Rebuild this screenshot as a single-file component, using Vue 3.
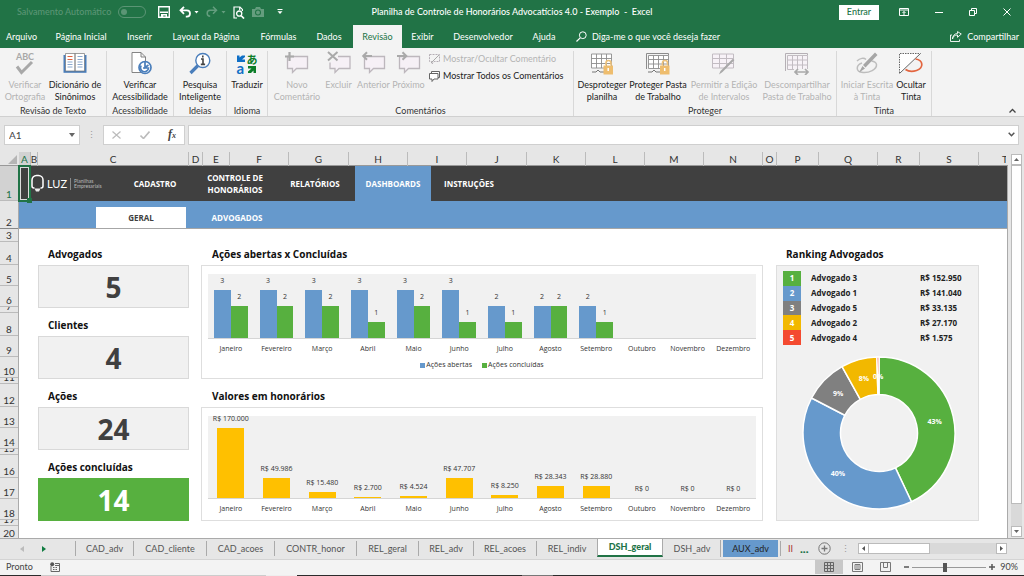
<script setup>
import { ref } from 'vue'

const ribbonTabs = ['Arquivo', 'Página Inicial', 'Inserir', 'Layout da Página', 'Fórmulas', 'Dados', 'Revisão', 'Exibir', 'Desenvolvedor', 'Ajuda']
const columns = ['A', 'B', 'C', 'D', 'E', 'F', 'G', 'H', 'I', 'J', 'K', 'L', 'M', 'N', 'O', 'P', 'Q', 'R', 'S', 'T']
const nav = [
  { name: 'CADASTRO' }, { name: 'CONTROLE DE HONORÁRIOS' }, { name: 'RELATÓRIOS' },
  { name: 'DASHBOARDS', active: true }, { name: 'INSTRUÇÕES' }
]
const cards = [
  { name: 'Advogados', value: 5 }, { name: 'Clientes', value: 4 },
  { name: 'Ações', value: 24 }, { name: 'Ações concluídas', value: 14, green: true }
]
const months = ['Janeiro', 'Fevereiro', 'Março', 'Abril', 'Maio', 'Junho', 'Julho', 'Agosto', 'Setembro', 'Outubro', 'Novembro', 'Dezembro']
const opened = [3, 3, 3, 3, 3, 3, 2, 2, 2, 0, 0, 0]
const closed = [2, 2, 2, 1, 2, 1, 1, 2, 1, 0, 0, 0]
const fees = [170000, 49986, 15480, 2700, 4524, 47707, 8250, 28343, 28880, 0, 0, 0]
const money = n => 'R$ ' + String(n).replace(/\B(?=(\d{3})+$)/g, '.')

const ranking = [
  { name: 'Advogado 3', total: 152950, color: '#57b03f' },
  { name: 'Advogado 1', total: 141040, color: '#6699cc' },
  { name: 'Advogado 5', total: 33135, color: '#808080' },
  { name: 'Advogado 2', total: 27170, color: '#f2b800' },
  { name: 'Advogado 4', total: 1575, color: '#f44a30' }
]
const sum = ranking.reduce((a, r) => a + r.total, 0)
const point = (turn, radius) => {
  const a = turn * Math.PI * 2
  return [Math.sin(a) * radius, -Math.cos(a) * radius]
}
let turn = 0
const slices = ranking.map(r => {
  const from = turn
  const to = (turn += r.total / sum)
  const big = to - from > 0.5 ? 1 : 0
  const label = point((from + to) / 2, 57)
  return {
    color: r.color,
    d: `M${point(from, 76)} A76 76 0 ${big} 1 ${point(to, 76)} L${point(to, 38.5)} A38.5 38.5 0 ${big} 0 ${point(from, 38.5)}Z`,
    x: label[0],
    y: label[1],
    text: Math.round((r.total / sum) * 100) + '%'
  }
})

const sheets = ['CAD_adv', 'CAD_cliente', 'CAD_acoes', 'CONTR_honor', 'REL_geral', 'REL_adv', 'REL_acoes', 'REL_indiv', 'DSH_geral', 'DSH_adv', 'AUX_adv', 'II']
const cell = ref('A1')
const formula = ref('')
const zoom = ref(90)
</script>

<template>
  <div class="app">
    <header class="titlebar">
      <div class="quick">
        <label class="autosave">Salvamento Automático
          <input type="checkbox" role="switch" disabled>
        </label>
        <button class="ico" aria-label="Salvar"><svg width="12" height="12" viewBox="0 0 12 12"><path d="M.7.7h10.6v10.6H.7z" fill="none" stroke="#fff" stroke-width="1.4" /><path d="M2 5.6h8V7H2zM3 8h6v4H7.6V9.6H5.2V12H3z" fill="#fff" /></svg></button>
        <button class="ico undo" aria-label="Desfazer"><svg width="20" height="12" viewBox="0 0 20 12"><path d="M1.5 4.3h6.3a3.2 3.2 0 0 1 0 6.4H6.8M5 .8 1.5 4.3 5 7.8" fill="none" stroke="#fff" stroke-width="1.8" /><path d="M15.5 5h4l-2 2.5z" fill="#fff" /></svg></button>
        <button class="ico faded" aria-label="Refazer"><svg width="20" height="12" viewBox="0 0 20 12"><path d="M10.5 4.3H4.2a3 3 0 0 0 0 6M7 .8l3.5 3.5L7 7.8" fill="none" stroke="#fff" stroke-width="1.5" /><path d="M15.500 5h4l-2 2.500z" fill="#fff" /></svg></button>
        <button class="ico preview" aria-label="Visualizar"><svg width="12" height="13" viewBox="0 0 12 13"><path d="M4 12H1V1h6l2.4 2.4V5M6.700 1v3" fill="none" stroke="#fff" stroke-width="1.2" /><circle cx="6.2" cy="7.6" r="2.6" fill="none" stroke="#fff" stroke-width="1.3" /><path d="m8 9.500 3 3" stroke="#fff" stroke-width="1.700" /></svg></button>
        <button class="ico faded" aria-label="Câmera"><svg width="12" height="10" viewBox="0 0 12 10"><path d="M0 2h3l1-2h4l1 2h3v8H0z" fill="#fff" /><circle cx="6" cy="5.5" r="2.5" fill="none" stroke="#217346" stroke-width="1.1" /></svg></button>
        <button class="ico more" aria-label="Personalizar"><svg width="6" height="6" viewBox="0 0 6 6"><path d="M.5 0h5v1h-5zM.5 2.2h5L3 5z" fill="#fff" /></svg></button>
      </div>
      <h1>Planilha de Controle de Honorários Advocatícios 4.0 - Exemplo&nbsp; -&nbsp; Excel</h1>
      <div class="window">
        <button class="login">Entrar</button>
        <button class="ico" aria-label="Opções da faixa"><svg width="10" height="8" viewBox="0 0 10 8"><path d="M.5.5h9v7h-9zM.5 2h9M5 7V3.5M3.5 5 5 3.5 6.5 5" fill="none" stroke="#fff" /></svg></button>
        <button class="ico" aria-label="Minimizar"><svg width="8" height="8" viewBox="0 0 8 8"><path d="M0 4.5h8" stroke="#fff" /></svg></button>
        <button class="ico" aria-label="Restaurar"><svg width="8" height="8" viewBox="0 0 8 8"><path d="M.5 2.5h5v5h-5zM2.5 2V.5h5v5H6" fill="none" stroke="#fff" /></svg></button>
        <button class="ico" aria-label="Fechar"><svg width="8" height="8" viewBox="0 0 8 8"><path d="m.5.5 7 7m0-7-7 7" stroke="#fff" /></svg></button>
      </div>
    </header>

    <nav class="menubar">
      <div class="menus">
        <button v-for="t in ribbonTabs" :key="t" :class="{ active: t === 'Revisão' }">{{ t }}</button>
      </div>
      <button class="tell"><svg width="11" height="11" viewBox="0 0 11 11"><circle cx="6.8" cy="4.2" r="3.4" fill="none" stroke="#fff" /><path d="M4.2 6.8.5 10.5" stroke="#fff" stroke-width="1.2" /></svg>Diga-me o que você deseja fazer</button>
      <button class="share"><svg width="12" height="11" viewBox="0 0 12 11"><path d="M2 4H.5v6.5h9V8.5M2.5 8C3 5 5 4 7.5 4V6.3L11.3 3 7.5.6V2.5C4.5 2.5 2.5 5 2.5 8z" fill="none" stroke="#fff" stroke-width=".9" /></svg>Compartilhar</button>
    </nav>

    <section class="ribbon" aria-label="Revisão">
      <div class="group g1">
        <div class="tools">
          <button class="tool" disabled>
            <svg viewBox="0 0 26 24"><text x="13" y="9" text-anchor="middle" font-size="9" font-weight="700">ABC</text><path d="m5 15.500 4.500 6L20 11" fill="none" stroke="#a8a8a8" stroke-width="3" /></svg>
            <span>Verificar<br>Ortografia</span>
          </button>
          <button class="tool">
            <svg viewBox="0 0 26 24"><path d="M1.500 4h23v17.800h-23z" fill="#4a7ebb" /><path d="M3.500 2.500h9.500V20H3.500zM13 2.500h9.500V20H13z" fill="#fff" stroke="#777" stroke-width=".7" /><path d="M5.500 5.500h5M5.500 8.500h5" stroke="#e0623e" /><path d="M5.500 11h5M5.500 13.500h5M5.500 16h5M15.500 5.500h5M15.500 8.500h5M15.500 11h5M15.500 13.500h5M15.500 16h5" stroke="#8aa9cf" /></svg>
            <span>Dicionário de<br>Sinônimos</span>
          </button>
        </div>
        <h2>Revisão de Texto</h2>
      </div>
      <div class="group g2">
        <div class="tools">
          <button class="tool">
            <svg viewBox="0 0 26 24"><path d="M5 1.500h9l4.500 4.500v15.500H5zM14 1.500V6h4.500" fill="#fff" stroke="#777" stroke-width=".9" /><circle cx="18" cy="16.500" r="6" fill="#fff" stroke="#4a7ebb" stroke-width="1.700" /><path d="M18 11v5.500l3.500-2.500M14.200 14.500a4 4 0 1 0 7.300 2.500H16" fill="none" stroke="#4a7ebb" stroke-width="1.700" /></svg>
            <span>Verificar<br>Acessibilidade</span>
          </button>
        </div>
        <h2>Acessibilidade</h2>
      </div>
      <div class="group g3">
        <div class="tools">
          <button class="tool">
            <svg viewBox="0 0 26 24"><path d="M11 14.500 3.500 22" stroke="#4a7ebb" stroke-width="3.200" /><circle cx="15.800" cy="9.500" r="7" fill="#fff" stroke="#4a7ebb" stroke-width="1.400" /><path d="M15.800 4.500v2M14 8h2v5M13.800 13.400h4.300" fill="none" stroke="#444" stroke-width="1.600" /></svg>
            <span>Pesquisa<br>Inteligente</span>
          </button>
        </div>
        <h2>Ideias</h2>
      </div>
      <div class="group g4">
        <div class="tools">
          <button class="tool">
            <svg viewBox="0 0 26 24"><path d="M3 4.500h2.500v2L8 4.500h3V6L8 8.500h3V11H3z" fill="#0f6fc6" /><text x="2.500" y="22.500" font-size="15" font-weight="700" class="la">a</text><text x="12.500" y="12.500" font-size="11" font-weight="700" class="ja">あ</text><path d="M22 15h-8v2.500h3.500L14 20.500V22h3l2.500-2.500V22H22z" fill="#0b7d28" /></svg>
            <span>Traduzir</span>
          </button>
        </div>
        <h2>Idioma</h2>
      </div>
      <div class="group g5">
        <div class="tools">
          <button class="tool" disabled>
            <svg viewBox="0 0 26 24"><path d="M3.500 5.500h20v12h-11l-4 4v-4h-5z" fill="#f6f0f6" stroke="#bdb7bd" stroke-width="1.300" /><path d="M5.500 1v9M1 5.500h9" stroke="#a9a9a9" stroke-width="2.200" /></svg>
            <span>Novo<br>Comentário</span>
          </button>
          <button class="tool" disabled>
            <svg viewBox="0 0 26 24"><path d="M12 5.500h12v12H13l-4 4v-4H4v-6" fill="#f6f0f6" stroke="#bdb7bd" stroke-width="1.300" /><path d="m2 1 9.500 8.500M11.500 1 2 9.500" stroke="#a9a9a9" stroke-width="2" /></svg>
            <span>Excluir</span>
          </button>
          <button class="tool" disabled>
            <svg viewBox="0 0 26 24"><path d="M3.500 5.500h20v12h-11l-4 4v-4h-5z" fill="#f6f0f6" stroke="#bdb7bd" stroke-width="1.300" /><path d="M11 5H2.500M6 1.200 2.200 5 6 8.800" fill="none" stroke="#a9a9a9" stroke-width="2" /></svg>
            <span>Anterior</span>
          </button>
          <button class="tool" disabled>
            <svg viewBox="0 0 26 24"><path d="M3.500 5.500h20v12h-11l-4 4v-4h-5z" fill="#f6f0f6" stroke="#bdb7bd" stroke-width="1.300" /><path d="M1 5h9M6.500 1.200 10.300 5 6.500 8.800" fill="none" stroke="#a9a9a9" stroke-width="2" /></svg>
            <span>Próximo</span>
          </button>
          <div class="lines">
            <button disabled><svg width="11" height="11" viewBox="0 0 11 11"><path d="M.5.5h10v7H5l-2 2.500V7.500H.5z" fill="none" stroke="#b5aeb5" stroke-dasharray="2 1" /><path d="M2 9 10 1" stroke="#a9a9a9" /></svg>Mostrar/Ocultar Comentário</button>
            <button><svg width="11" height="11" viewBox="0 0 11 11"><path d="M2.500 2V.5h8v6H9M.5 2.500H9v5.500H5L3 10.500V8H.5z" fill="#fff" stroke="#666" /></svg>Mostrar Todos os Comentários</button>
          </div>
        </div>
        <h2>Comentários</h2>
      </div>
      <div class="group g6">
        <div class="tools">
          <button class="tool">
            <svg viewBox="0 0 26 24"><path d="M2.500 3h20v14h-20zM2.500 7.500h20M2.500 12.500h20M7.500 3v14M12.500 3v14M17.500 3v14" fill="#fff" stroke="#8c8c8c" stroke-width=".9" /><path d="M3 21h4l2-2 2 2h4" fill="none" stroke="#777" /><path d="M17 14.500V12a2.500 2.500 0 0 1 5 0v2.500" fill="none" stroke="#eec27a" stroke-width="1.600" /><path d="M14.500 14.500H24v9h-9.500z" fill="#eebd6e" /><path d="M19.200 17v3" stroke="#fff" stroke-width="1.500" /></svg>
            <span>Desproteger<br>planilha</span>
          </button>
          <button class="tool">
            <svg viewBox="0 0 26 24"><path d="M1.500 18V2.500h22v2" fill="none" stroke="#8c8c8c" /><path d="M3.500 4.500h20v13h-20zM3.500 8.500h20M3.500 13h20M8.500 4.500v13M13.500 4.500v13M18.500 4.500v13" fill="#fff" stroke="#8c8c8c" stroke-width=".9" /><path d="M3 21h4l2-2 2 2h4" fill="none" stroke="#777" /><path d="M17.500 14.500V12a2.500 2.500 0 0 1 5 0v2.500" fill="none" stroke="#eec27a" stroke-width="1.600" /><path d="M15 14.500h9.500v9H15z" fill="#eebd6e" /><path d="M19.700 17v3" stroke="#fff" stroke-width="1.500" /></svg>
            <span>Proteger Pasta<br>de Trabalho</span>
          </button>
          <button class="tool" disabled>
            <svg viewBox="0 0 26 24"><path d="M1.500 3h21v14h-21zM1.500 7.500h21M1.500 12.500h21M8.500 3v14M15.500 3v14" fill="#f7f2f7" stroke="#c2bcc2" /><path d="m23.500 9-12 12-3.500 2.500L9.500 20l12-12z" fill="#a9a9a9" /></svg>
            <span>Permitir a Edição<br>de Intervalos</span>
          </button>
          <button class="tool" disabled>
            <svg viewBox="0 0 26 24"><path d="M1.500 20V2.500h22v2" fill="none" stroke="#b5afb5" /><path d="M3.500 4.500h20v14h-20zM3.500 9h20M3.500 14h20M8.500 4.500v14M13.500 4.500v14M18.500 4.500v14" fill="#f7f2f7" stroke="#c2bcc2" /><path d="M10 18h15v5H10z" fill="#f3f3f3" /><path d="M11 21h13M14 18l-3 3 3 3M21 18l3 3-3 3" fill="none" stroke="#a9a9a9" stroke-width="1.700" /></svg>
            <span>Descompartilhar<br>Pasta de Trabalho</span>
          </button>
        </div>
        <h2>Proteger</h2>
      </div>
      <div class="group g7">
        <div class="tools">
          <button class="tool" disabled>
            <svg viewBox="0 0 26 24"><path d="M3 10c3-3 7-3.500 9-1.500M8 12c-6 2-7 9 1 9.500 6 .5 14-3 13.500-8-.3-2-2-3-5-3.500" fill="none" stroke="#bdbdbd" stroke-width="1.500" /><path d="M21 1.500 23.500 4 11.500 16.500 9 14zM8.500 15l2.500 2.500-6 4z" fill="#a6a6a6" /></svg>
            <span>Iniciar Escrita<br>à Tinta</span>
          </button>
          <button class="tool">
            <svg viewBox="0 0 26 24"><path d="M1.500 2.500h21l-21 20z" fill="#fff" /><path d="M1.500 22V2.500h21" fill="none" stroke="#666" stroke-dasharray="1.500 1" /><path d="m1.500 22.500 21-20" stroke="#666" /><path d="M17.500 8c8 1 8.500 9 1 11.500-4 1.300-8 1-11-1" fill="none" stroke="#e3653f" stroke-width="1.700" /></svg>
            <span>Ocultar<br>Tinta</span>
          </button>
        </div>
        <h2>Tinta</h2>
      </div>
      <button class="collapse" aria-label="Recolher"><svg width="7" height="5" viewBox="0 0 7 5"><path d="m.5 4.500 3-3 3 3" fill="none" stroke="#444" stroke-width="1.300" /></svg></button>
    </section>

    <section class="formulabar">
      <div class="namebox"><input v-model="cell" aria-label="Caixa de nome"><button aria-label="Nomes"><svg width="6" height="4" viewBox="0 0 6 4"><path d="M0 0h6L3 4z" fill="#666" /></svg></button></div>
      <span class="dots">⋮</span>
      <div class="fx">
        <button aria-label="Cancelar"><svg width="9" height="8" viewBox="0 0 9 8"><path d="m.5.5 8 7m0-7-8 7" stroke="#bbb" stroke-width="1.200" /></svg></button>
        <button aria-label="Inserir"><svg width="10" height="8" viewBox="0 0 10 8"><path d="m.5 4.500 3 3 6-7" fill="none" stroke="#bbb" stroke-width="1.600" /></svg></button>
        <button class="fn" aria-label="Inserir função"><i>f</i><i class="x">x</i></button>
      </div>
      <div class="formula"><input v-model="formula" aria-label="Barra de fórmulas"><button aria-label="Expandir"><svg width="7" height="5" viewBox="0 0 7 5"><path d="m.7.7 2.800 3 2.800-3" fill="none" stroke="#555" stroke-width="1.500" /></svg></button></div>
    </section>

    <section class="workspace">
      <div class="gridhead">
        <div class="corner"><svg width="9" height="9" viewBox="0 0 9 9"><path d="M9 0v9H0z" fill="#b5b5b5" /></svg></div>
        <div class="cols"><span v-for="c in columns" :key="c" :class="{ on: c === 'A' }">{{ c }}</span></div>
      </div>
      <div class="rows"><span v-for="n in 20" :key="n" :class="{ on: n === 1 }">{{ n }}</span></div>

      <div class="sheet">
        <div class="cursor"></div>
        <nav class="mainnav">
          <a class="logo" href="#" aria-label="LUZ Planilhas Empresariais">
            <svg width="13" height="19" viewBox="0 0 13 19"><path d="M3.500 14H3a2 2 0 0 1-2-2V6a4.500 4.500 0 0 1 4.500-4.500h2A4.500 4.500 0 0 1 12 6v6a2 2 0 0 1-2 2h-.5" fill="none" stroke="#fff" stroke-width="1.500" /><path d="M3.500 14.500h6L8 17.500H5z" fill="#eee" /></svg>
            <b>LUZ</b><small>Planilhas<br>Empresariais</small>
          </a>
          <a v-for="n in nav" :key="n.name" href="#" class="item" :class="{ active: n.active }">{{ n.name }}</a>
        </nav>
        <nav class="subnav"><a href="#" class="active">GERAL</a><a href="#">ADVOGADOS</a></nav>

        <div class="dash">
          <div class="stats">
            <template v-for="c in cards" :key="c.name">
              <h3>{{ c.name }}</h3>
              <div class="card" :class="{ green: c.green }">{{ c.value }}</div>
            </template>
          </div>

          <div class="charts">
            <h3>Ações abertas x Concluídas</h3>
            <div class="chart">
              <div class="plot">
                <div v-for="(m, i) in months" :key="m" class="slot">
                  <template v-if="opened[i]">
                    <div class="bar blue" :style="{ height: opened[i] * 25 + '%' }"><span>{{ opened[i] }}</span></div>
                    <div class="bar grn" :style="{ height: closed[i] * 25 + '%' }"><span>{{ closed[i] }}</span></div>
                  </template>
                </div>
              </div>
              <div class="months"><span v-for="m in months" :key="m">{{ m }}</span></div>
              <div class="legend"><span class="k1">Ações abertas</span><span class="k2">Ações concluídas</span></div>
            </div>
            <h3>Valores em honorários</h3>
            <div class="chart second">
              <div class="plot">
                <div v-for="(m, i) in months" :key="m" class="slot">
                  <div class="bar gold" :style="{ height: fees[i] / 2000 + '%' }"><span>{{ money(fees[i]) }}</span></div>
                </div>
              </div>
              <div class="months"><span v-for="m in months" :key="m">{{ m }}</span></div>
            </div>
          </div>

          <div class="rank">
            <h3>Ranking Advogados</h3>
            <div class="panel">
              <table>
                <tbody>
                  <tr v-for="(r, i) in ranking" :key="r.name">
                    <td class="pos" :class="'p' + (i + 1)">{{ i + 1 }}</td><td class="who">{{ r.name }}</td><td>{{ money(r.total) }}</td>
                  </tr>
                </tbody>
              </table>
              <svg class="donut" viewBox="-77 -77 154 154" role="img" aria-label="Participação por advogado">
                <path v-for="s in slices" :key="s.d" :d="s.d" :fill="s.color" stroke="#fff" stroke-width="1.500" stroke-linejoin="round" />
                <text v-for="s in slices" :key="s.text" :x="s.x" :y="s.y + 3" text-anchor="middle">{{ s.text }}</text>
              </svg>
            </div>
          </div>
        </div>
      </div>

      <div class="vscroll">
        <button aria-label="Subir"><svg width="5" height="3" viewBox="0 0 5 3"><path d="M0 3h5L2.500 0z" fill="#666" /></svg></button>
        <div class="track"><div class="thumb"></div></div>
        <button aria-label="Descer"><svg width="5" height="3" viewBox="0 0 5 3"><path d="M0 0h5L2.500 3z" fill="#666" /></svg></button>
      </div>
    </section>

    <nav class="sheetbar">
      <div class="tabs">
        <span class="arrows"><button class="dim" aria-label="Anterior"><svg width="4" height="6" viewBox="0 0 4 6"><path d="M4 0v6L0 3z" fill="#bbb" /></svg></button><button aria-label="Próxima"><svg width="4" height="6" viewBox="0 0 4 6"><path d="M0 0v6l4-3z" fill="#107c41" /></svg></button></span>
        <button v-for="s in sheets" :key="s" class="tab" :class="{ active: s === 'DSH_geral', aux: s === 'AUX_adv', last: s === 'II' }">{{ s }}</button>
        <button class="dotsmore" aria-label="Mais planilhas">...</button>
        <button class="add" aria-label="Nova planilha"><svg width="13" height="13" viewBox="0 0 13 13"><circle cx="6.500" cy="6.500" r="5.700" fill="none" stroke="#777" /><path d="M3.500 6.500h6M6.500 3.500v6" stroke="#777" stroke-width="1.300" /></svg></button>
        <span class="dots">⋮</span>
      </div>
      <div class="hscroll">
        <button aria-label="Esquerda"><svg width="3" height="5" viewBox="0 0 3 5"><path d="M3 0v5L0 2.500z" fill="#555" /></svg></button>
        <div class="track"><div class="thumb"></div></div>
        <button aria-label="Direita"><svg width="3" height="5" viewBox="0 0 3 5"><path d="M0 0v5l3-2.500z" fill="#555" /></svg></button>
      </div>
    </nav>

    <footer class="status">
      <span>Pronto</span>
      <button class="macro" aria-label="Gravar macro"><svg width="10" height="10" viewBox="0 0 10 10"><path d="M1 4v5.500h8.500v-8H5" fill="none" stroke="#666" /><circle cx="2.200" cy="2.200" r="2" fill="#555" /><path d="M5 3.500h4M3 5.500h1.500M5.500 5.500h1.500M3 7.500h1.500M5.500 7.500h1.500" stroke="#666" /></svg></button>
      <div class="right">
        <button class="view on" aria-label="Normal"><svg width="10" height="10" viewBox="0 0 10 10"><path d="M.5.5h9v9h-9zM.5 3.500h9M.5 6.500h9M3.500.5v9M6.500.5v9" fill="none" stroke="#666" /></svg></button>
        <button class="view" aria-label="Layout da página"><svg width="11" height="10" viewBox="0 0 11 10"><path d="M.5.5h10v9H.5zM3 2.500h5v5H3zM4 4h3M4 6h3" fill="none" stroke="#777" /></svg></button>
        <button class="view" aria-label="Quebra de página"><svg width="11" height="10" viewBox="0 0 11 10"><path d="M.5.5h10v9H.5zM3.500.5v5h4v-5" fill="none" stroke="#777" /></svg></button>
        <button class="pm" aria-label="Menos zoom"><svg width="5" height="6" viewBox="0 0 5 6"><path d="M0 3h5" stroke="#555" stroke-width="1.500" /></svg></button>
        <input v-model="zoom" type="range" min="10" max="190" aria-label="Zoom">
        <button class="pm" aria-label="Mais zoom"><svg width="6" height="6" viewBox="0 0 6 6"><path d="M0 3h6M3 0v6" stroke="#555" stroke-width="1.500" /></svg></button>
        <output>{{ zoom }}%</output>
      </div>
    </footer>
    <div class="edge"></div>
  </div>
</template>

<style>
html, body, #app { height: 100%; }
body { overflow: hidden; }
</style>

<style scoped>
.app {
  height: 100%; display: flex; flex-direction: column; background: #e6e6e6;
  font-family: Lato, "Noto Sans", sans-serif; font-size: 9px; line-height: 12px; color: #222;
}
*, *::before, *::after { box-sizing: border-box; }
button, input { font: inherit; color: inherit; background: none; border: 0; padding: 0; margin: 0; white-space: nowrap; }
h1, h2, h3 { margin: 0; font-size: inherit; font-weight: inherit; }
a { color: inherit; text-decoration: none; }
svg { display: block; flex: none; }

.titlebar { height: 24px; flex: none; background: #217346; color: #fff; display: grid; grid-template-columns: 1fr auto 1fr; align-items: center; font-weight: 500; }
.quick { display: flex; align-items: center; padding-left: 17px; gap: 7px; }
.autosave { display: flex; align-items: center; gap: 7px; color: #5b9575; margin-right: 5px; white-space: nowrap; }
.autosave input { appearance: none; width: 28px; height: 12px; border: 1px solid #5b9575; border-radius: 6px; padding: 2px; margin: 0; }
.autosave input::before { content: ""; display: block; width: 6px; height: 6px; border-radius: 3px; background: #5b9575; }
.undo { margin-left: 2px; }
.faded { opacity: .3; }
.more { margin-left: 6px; }
.window { display: flex; align-items: center; justify-content: flex-end; gap: 26px; padding-right: 13px; }
.login { background: #fff; color: #217346; width: 40px; height: 15px; margin-right: -6px; }

.menubar { height: 24px; flex: none; background: #217346; color: #fff; display: flex; align-items: stretch; }
.menus { display: grid; grid-template-columns: 43px 76px 41px 92px 53px 48px 49px 41px 80px 42px; }
.menus button { padding-top: 1px; }
.menus .active { background: #f3f3f3; color: #217346; margin-top: 1px; padding-top: 0; }
.tell, .share { display: flex; align-items: center; gap: 5px; padding-top: 1px; }
.tell { margin-left: 11px; }
.share { margin-left: auto; padding-right: 5px; }

.ribbon { height: 69px; flex: none; display: flex; background: #f3f3f3; border-bottom: 1px solid #d0d0d0; padding-top: 3px; }
.group { display: flex; flex-direction: column; justify-content: space-between; border-right: 1px solid #d8d8d8; }
.group h2 { text-align: center; line-height: 10px; color: #333; }
.tools { display: flex; justify-content: center; }
.tool { display: flex; flex-direction: column; align-items: center; white-space: nowrap; color: #222; }
.tool svg { width: 26px; height: 24px; }
.tool span { width: 0; display: flex; justify-content: center; text-align: center; margin-top: 4px; }
.tool svg text { font-family: Lato, sans-serif; fill: #a8a8a8; }
.tool svg .la { fill: #0f6fc6; }
.tool svg .ja { fill: #0b7d28; font-family: "Noto Sans CJK JP", sans-serif; }
button:disabled { color: #b4b4b4; }
.g1 { width: 107px; }
.g1 .tools { justify-content: flex-start; }
.g1 .tool { width: 50px; }
.g2 { width: 67px; }
.g3 { width: 53px; }
.g4 { width: 41px; }
.g5 { width: 306px; }
.g5 .tools { justify-content: flex-start; padding-left: 8px; }
.g5 .tool { width: 35px; }
.g5 .tool:first-child { width: 42px; margin-right: 3px; }
.lines { display: flex; flex-direction: column; gap: 5px; padding: 2px 0 0 3px; }
.lines button { display: flex; align-items: center; gap: 3px; }
.g6 { width: 263px; }
.g6 .tools { justify-content: flex-start; }
.g6 .tool { width: 56px; }
.g6 .tool:nth-child(3) { width: 76px; }
.g6 .tool:nth-child(4) { width: 70px; }
.g7 { width: 95px; }
.g7 .tools { justify-content: flex-start; padding-left: 2px; }
.g7 .tool { width: 56px; }
.g7 .tool + .tool { width: 32px; }
.collapse { margin: auto 8px 3px auto; }

.formulabar { height: 35px; flex: none; display: flex; align-items: center; padding: 0 5px 0 4px; }
.namebox, .fx, .formula { height: 20px; background: #fff; border: 1px solid #cfcfcf; display: flex; align-items: center; }
.namebox { width: 76px; padding: 0 4px; }
.namebox input { flex: 1; min-width: 0; font-size: 10px; color: #444; }
.dots { width: 23px; text-align: center; color: #999; }
.fx { width: 82px; justify-content: space-between; padding: 0 8px; margin-right: 3px; }
.fn { font-family: "Liberation Serif", serif; font-size: 12px; font-weight: 700; color: #444; }
.fn .x { font-size: 8px; }
.formula { flex: 1; padding-right: 3px; }
.formula input { flex: 1; min-width: 0; }

.workspace { flex: 1; min-height: 0; display: grid; grid-template-columns: 19px 1fr 16px; grid-template-rows: 14px 1fr; font-family: "Open Sans", "Noto Sans", sans-serif; }
.gridhead { grid-column: 1 / 3; display: grid; grid-template-columns: 19px 1fr; border-bottom: 1px solid #999; font: 10px/14px Lato, sans-serif; }
.corner { display: flex; justify-content: flex-end; align-items: flex-end; padding: 0 2px 2px 0; }
.cols { display: grid; grid-template-columns: 12fr 7fr 151fr 14fr 27fr 59fr 60fr 59fr 59fr 60fr 59fr 59fr 59fr 59fr 14fr 42fr 59fr 42fr 59fr 29fr; }
.cols span { border-right: 1px solid #bbb; text-align: center; min-width: 0; overflow: hidden; color: #333; display: flex; justify-content: center; }
.cols span:last-child { border: 0; justify-content: flex-end; clip-path: inset(0 2px 0 0); }
.cols .on, .rows .on { background: #d2d2d2; color: #217346; }
.rows { grid-row: 2; display: grid; grid-template-rows: 35fr 28fr 13fr 23fr 21fr 21fr 6fr 23fr 21fr 21fr 6fr 23fr 21fr 21fr 6fr 23fr 21fr 21fr 6fr 12fr; min-height: 0; border-right: 1px solid #aaa; font: 10px/11px Lato, sans-serif; color: #333; }
.rows span { border-bottom: 1px solid #bbb; display: flex; justify-content: center; align-items: flex-end; min-height: 0; overflow: hidden; }
.rows span:nth-child(2) { border-bottom-color: #888; }
.rows span:last-child { border-bottom: 0; align-items: flex-start; padding-top: 2px; }

.sheet { position: relative; background: #fff; min-width: 0; min-height: 0; display: grid; grid-template-rows: 35fr 28fr 309fr; border-right: 1px solid #aaa; }
.cursor { position: absolute; left: -1px; top: -1px; width: 13px; height: 37px; border: 2px solid #217346; box-shadow: inset 0 0 0 1px #ddd; z-index: 2; }
.cursor::after { content: ""; position: absolute; right: -3px; bottom: -3px; width: 5px; height: 5px; background: #217346; }
.mainnav { background: #404040; color: #fff; display: flex; font: 700 8px/12px "Open Sans", sans-serif; }
.logo { display: flex; align-items: center; width: 96px; padding-left: 12px; }
.logo b { font: 400 11px/16px Lato, sans-serif; margin: 0 3px; }
.logo small { font: 400 5px/5px Lato, sans-serif; border-left: 1px solid #888; padding: 1px 0 1px 3px; color: #bbb; }
.item { width: 80px; padding: 0 8px; display: flex; align-items: center; justify-content: center; text-align: center; }
.item.active { background: #6699cc; width: 76px; }
.item.active + .item { width: 76px; }
.subnav { background: #6699cc; border-bottom: 1px solid #a6a6a6; color: #fff; display: flex; padding: 6px 0 0 77px; font: 700 8px/12px "Open Sans", sans-serif; }
.subnav a { width: 90px; display: flex; align-items: center; justify-content: center; }
.subnav a + a { width: 102px; }
.subnav .active { background: #fff; color: #404040; }

.dash { display: grid; grid-template-columns: 19fr 151fr 12fr 562fr 13fr 203fr 28fr; min-height: 0; padding-bottom: 17px; }
.dash h3 { font: 700 10px/14px "Open Sans", sans-serif; color: #111; padding: 0 0 4px 10px; align-self: end; }
.dash .charts h3 { padding-left: 11px; }
.stats { grid-column: 2; display: grid; grid-template-rows: 36fr 43fr 28fr 43fr 28fr 43fr 28fr 43fr; min-height: 0; }
.card { background: #f1f1f1; border: 1px solid #d9d9d9; color: #404040; font: 700 28px/40px "Open Sans", sans-serif; display: flex; align-items: center; justify-content: center; min-height: 0; }
.card.green { background: #57b03f; color: #fff; border-color: #57b03f; }
.charts { grid-column: 4; display: grid; grid-template-rows: 36fr 114fr 28fr 114fr; min-width: 0; min-height: 0; }
.chart { border: 1px solid #dedede; padding: 8px 6px 0; display: flex; flex-direction: column; min-height: 0; font: 7px/10px "Open Sans", sans-serif; color: #333; }
.plot { height: 65px; background: #f1f1f1; border-bottom: 1px solid #d5d5d5; display: flex; }
.second .plot { height: 83px; }
.slot { flex: 1; display: flex; align-items: flex-end; justify-content: center; min-width: 0; }
.bar { width: 37%; position: relative; display: flex; justify-content: center; }
.bar span { position: absolute; bottom: 100%; margin-bottom: 4px; white-space: nowrap; }
.blue { background: #6699cc; }
.grn { background: #57b03f; }
.gold { background: #ffc000; width: 59%; }
.months { display: flex; margin-top: 5px; }
.months span { flex: 1; text-align: center; min-width: 0; }
.legend { display: flex; justify-content: center; gap: 10px; margin-top: 6px; }
.legend span { display: flex; align-items: center; gap: 1px; }
.legend span::before { content: ""; width: 5px; height: 5px; background: #6699cc; }
.legend .k2::before { background: #57b03f; }
.rank { grid-column: 6; display: grid; grid-template-rows: 36fr 256fr; min-width: 0; min-height: 0; }
.panel { background: #f1f1f1; border: 1px solid #dedede; padding: 5px 3px 5px 6px; display: flex; flex-direction: column; align-items: center; min-height: 0; }
table { width: 100%; height: 74px; border-collapse: collapse; font: 700 8px/12px "Open Sans", sans-serif; color: #222; }
td { padding: 0; width: 55px; }
.who { width: auto; padding-left: 10px; }
.pos { width: 18px; text-align: center; color: #fff; background: #57b03f; }
.p2 { background: #6699cc; }
.p3 { background: #808080; }
.p4 { background: #f2b800; }
.p5 { background: #f44a30; }
.donut { width: 154px; height: 154px; margin-top: 11px; }
.donut text { font: 700 7px "Open Sans", sans-serif; fill: #fff; }

.vscroll { grid-column: 3; grid-row: 1 / 3; display: flex; flex-direction: column; padding: 2px 2px 1px 3px; }
.vscroll button, .hscroll button { display: flex; align-items: center; justify-content: center; background: #fff; border: 1px solid #bbb; width: 11px; height: 11px; flex: none; }
.vscroll .track { flex: 1; background: #d9d9d9; }
.vscroll .thumb { height: 94%; background: #fff; border: 1px solid #bbb; }

.sheetbar { height: 21px; flex: none; display: flex; border-top: 1px solid #aaa; padding: 0 17px 1px 0; color: #555; }
.tabs { display: grid; grid-template-columns: 75px 58px 73px 68px 82px 62px 55px 63px 61px 66px 58px 59px 20px 8px 32px 18px; align-items: center; }
.arrows { display: flex; padding-left: 20px; gap: 18px; }
.tab { height: 15px; border-left: 1px solid #aaa; }
.tab.active { height: 18px; align-self: start; background: #fff; color: #217346; font-weight: 900; border-right: 1px solid #aaa; border-bottom: 2px solid #217346; }
.tab.active + .tab { border-left: 0; }
.tab.aux { height: 17px; border: 1px solid #e6e6e6; border-width: 0 2px; background: #6699cc; color: #222; box-shadow: -1px 0 #aaa; }
.tab.last { color: #a33; }
.dotsmore { color: #217346; font-weight: 900; font-size: 12px; }
.add { justify-self: center; }
.tabs .dots { width: 10px; }
.hscroll { flex: 1; display: flex; align-items: center; }
.hscroll .track { flex: 1; height: 11px; background: #d9d9d9; }
.hscroll .thumb { width: 48%; height: 11px; background: #fff; border: 1px solid #bbb; border-left: 0; }

.status { height: 16px; flex: none; display: flex; align-items: center; background: #f3f3f3; border-top: 1px solid #d4d4d4; padding: 0 6px 1px; color: #444; }
.macro { margin-left: 17px; }
.right { margin-left: auto; display: flex; align-items: center; height: 100%; }
.view { width: 28px; height: 100%; display: flex; align-items: center; justify-content: center; }
.view.on { background: #c8c8c8; }
.pm { padding: 0 3px; }
.view + .pm { margin-left: 2px; }
.status input { appearance: none; width: 74px; height: 9px; background: linear-gradient(#999, #999) center / 100% 1px no-repeat; }
.status input::-webkit-slider-thumb { appearance: none; width: 4px; height: 9px; background: #555; }
.status output { width: 20px; text-align: right; }
.edge { height: 1px; flex: none; background: linear-gradient(90deg, #2b2b2b 0 4%, #ccc 4% 26%, #eee 26% 29%, #2b2b2b 29% 51%, #777 51% 54%, #2b2b2b 54%); }
</style>
